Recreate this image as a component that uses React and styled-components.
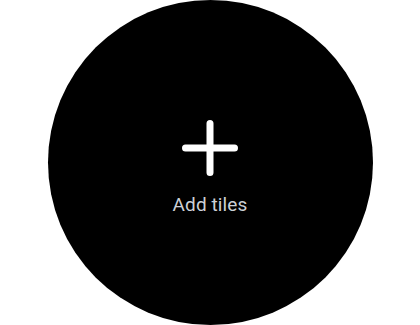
import React from 'react';
import styled, { createGlobalStyle } from 'styled-components';

const GlobalStyle = createGlobalStyle`
  html, body {
    margin: 0;
    padding: 0;
    background: #ffffff;
  }
  body {
    font-family: Roboto, "Noto Sans", sans-serif;
  }
`;

const Screen = styled.div`
  width: 420px;
  height: 325px;
  display: flex;
  align-items: center;
  justify-content: center;
`;

const WatchFace = styled.div`
  width: 325px;
  height: 325px;
  border-radius: 50%;
  background: #000000;
  display: flex;
  flex-direction: column;
  align-items: center;
  justify-content: center;
  padding-top: 11px;
  box-sizing: border-box;
`;

const AddButton = styled.button`
  width: 56px;
  height: 56px;
  padding: 0;
  border: none;
  background: transparent;
  display: flex;
  align-items: center;
  justify-content: center;
  cursor: pointer;
`;

const Label = styled.div`
  margin-top: 17px;
  font-size: 19px;
  color: #cdd0d6;
  letter-spacing: 0.1px;
`;

const PlusIcon = () => (
  <svg width="56" height="56" viewBox="0 0 56 56">
    <path
      d="M28 3.5 V52.5 M3.5 28 H52.5"
      stroke="#ffffff"
      strokeWidth="7"
      strokeLinecap="round"
      fill="none"
    />
  </svg>
);

export default function App() {
  return (
    <>
      <GlobalStyle />
      <Screen>
        <WatchFace>
          <AddButton aria-label="Add tiles">
            <PlusIcon />
          </AddButton>
          <Label>Add tiles</Label>
        </WatchFace>
      </Screen>
    </>
  );
}
